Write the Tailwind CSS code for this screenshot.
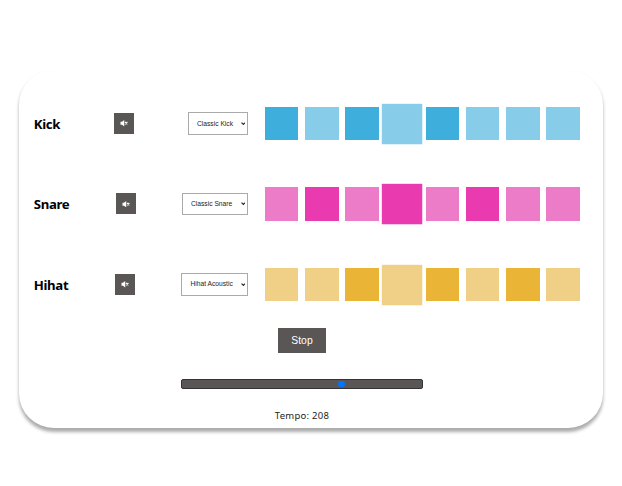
<!DOCTYPE html>
<html lang="en">
<head>
<meta charset="utf-8">
<title>Drum Machine</title>
<script src="https://cdn.jsdelivr.net/npm/@tailwindcss/browser@4"></script>
</head>
<body class="h-[486px] overflow-hidden bg-white pt-[70px] pl-[18.6px]">
<main class="flex h-[358px] w-[584.6px] flex-col rounded-[35px] bg-white pt-[13.4px] shadow-[0_3.5px_3.5px_-0.3px_rgba(0,0,0,0.33)]">
  <section id="tracks"></section>
  <button class="mt-[3.6px] ml-[259.4px] h-[25px] w-[48px] shrink-0 bg-[#5b5656] font-['Liberation_Sans',sans-serif] text-[10.4px] leading-[25px] text-white">Stop</button>
  <div class="mt-[26.2px] ml-[162.4px] flex h-[9.4px] w-[242.4px] shrink-0 items-center rounded-[2px] border border-[#353333] bg-[#5b5656] pl-[156.2px]">
    <span class="size-[6.6px] rounded-full bg-[#0075ff]"></span>
  </div>
  <p class="mt-[20.4px] ml-[256.2px] font-['Noto_Sans',sans-serif] text-[9.5px] leading-[14px] tracking-[0.26px] whitespace-nowrap text-[#222]">Tempo: 208</p>
</main>
<template id="mute-icon">
  <svg class="h-[6.4px] w-[8px]" viewBox="0 0 16 12.8" fill="#fff"><path d="M1 3.500h3l4.500-3.500v12.800L4 9.300H1z"/><path d="M10 4l4.800 4.800m0-4.800L10 8.800" stroke="#fff" stroke-width="2.200" fill="none"/></svg>
</template>
<script>
const tracks = [
  { name: 'Kick', sound: 'Classic Kick', label: 'w-[80px]', select: 'w-[60px]', on: 'bg-[#3eafdd]', off: 'bg-[#87cde9]', steps: [1,0,1,0,1,0,0,0] },
  { name: 'Snare', sound: 'Classic Snare', label: 'w-[82px]', select: 'w-[66px]', on: 'bg-[#e93ab0]', off: 'bg-[#ed7cc8]', steps: [0,1,0,1,0,1,0,0] },
  { name: 'Hihat', sound: 'Hihat Acoustic', label: 'w-[80.8px]', select: 'w-[66.6px]', on: 'bg-[#eab536]', off: 'bg-[#f0d087]', steps: [0,0,1,0,1,0,1,0] }
];
const current = 3;
const icon = document.getElementById('mute-icon').innerHTML;
document.getElementById('tracks').innerHTML = tracks.map(t => `
  <div class="flex h-[80.4px] items-center">
    <div class="flex w-[229.4px] items-center pl-[15.2px]">
      <h2 class="${t.label} shrink-0 pt-[1px] font-['Noto_Sans',sans-serif] text-[13.2px] leading-[18px] font-bold tracking-[-0.35px] text-black">${t.name}</h2>
      <button class="flex h-[21px] w-[20.4px] shrink-0 items-center justify-center bg-[#5b5656]">${icon}</button>
      <div class="${t.select} ml-auto flex h-[22.4px] shrink-0 items-center justify-between border border-[#aaa] bg-white pr-[1.6px] pl-[8px] font-['Liberation_Sans',sans-serif] text-[6.7px] leading-none text-[#222]">
        <span class="pt-[0.6px] whitespace-nowrap">${t.sound}</span>
        <svg class="h-[3.2px] w-[4.8px]" viewBox="0 0 9 6" fill="none" stroke="#222" stroke-width="2.1"><path d="M1 1l3.500 3.500L8 1"/></svg>
      </div>
    </div>
    <div class="ml-[16.9px] flex gap-[6.6px]">
      ${t.steps.map((s, i) => `<span class="size-[33.6px] ${s ? t.on : t.off} ${i === current ? 'scale-[1.19]' : ''}"></span>`).join('')}
    </div>
  </div>`).join('');
</script>
</body>
</html>
